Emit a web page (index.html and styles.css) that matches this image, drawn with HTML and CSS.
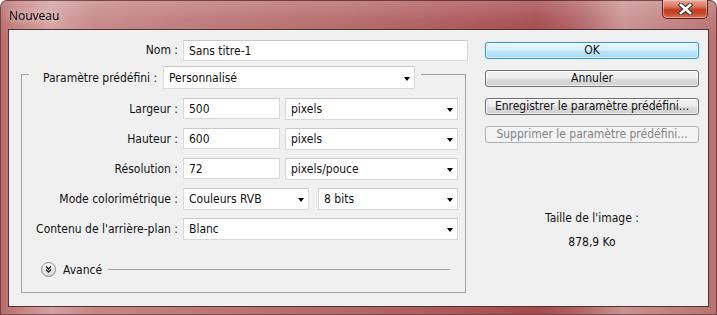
FILE: index.html
```html
<!DOCTYPE html>
<html lang="fr">
<head>
<meta charset="utf-8">
<title>Nouveau</title>
<link rel="stylesheet" href="styles.css">
</head>
<body>
<div class="window">
  <div class="titlebar">
    <span class="title">Nouveau</span>
    <div class="close">
      <svg width="15" height="12" viewBox="0 0 15 12">
        <path d="M3 2 L12 10 M12 2 L3 10" stroke="#3b3b3b" stroke-width="4.6" stroke-linecap="square" fill="none"/>
        <path d="M3 2 L12 10 M12 2 L3 10" stroke="#ffffff" stroke-width="2.6" stroke-linecap="square" fill="none"/>
      </svg>
    </div>
  </div>
  <div class="client">
    <div class="left">
      <div class="name-row">
        <span class="lbl name-lbl">Nom :</span>
        <div class="field text name-field">Sans titre-1</div>
      </div>
      <fieldset class="group">
        <legend class="preset-legend">
          <span class="lbl">Paramètre prédéfini :</span>
          <div class="field combo preset">Personnalisé<i class="arrow"></i></div>
        </legend>
        <div class="grid">
          <span class="lbl">Largeur :</span>
          <div class="pair">
            <div class="field text num">500</div>
            <div class="field combo grow">pixels<i class="arrow"></i></div>
          </div>
          <span class="lbl">Hauteur :</span>
          <div class="pair">
            <div class="field text num">600</div>
            <div class="field combo grow">pixels<i class="arrow"></i></div>
          </div>
          <span class="lbl">Résolution :</span>
          <div class="pair">
            <div class="field text num">72</div>
            <div class="field combo grow">pixels/pouce<i class="arrow"></i></div>
          </div>
          <span class="lbl">Mode colorimétrique :</span>
          <div class="pair wide-gap">
            <div class="field combo mode">Couleurs RVB<i class="arrow"></i></div>
            <div class="field combo grow">8 bits<i class="arrow"></i></div>
          </div>
          <span class="lbl">Contenu de l'arrière-plan :</span>
          <div class="pair">
            <div class="field combo grow">Blanc<i class="arrow"></i></div>
          </div>
        </div>
        <div class="adv">
          <span class="adv-btn">
            <svg width="15" height="15" viewBox="0 0 15 15">
              <defs>
                <linearGradient id="g" x1="0" y1="0" x2="0" y2="1">
                  <stop offset="0" stop-color="#ffffff"/>
                  <stop offset="1" stop-color="#d6d6d6"/>
                </linearGradient>
              </defs>
              <circle cx="7.5" cy="7.5" r="7" fill="url(#g)" stroke="#858585" stroke-width="1"/>
              <path d="M5 4.5 L7.5 7 L10 4.5 M5 7.5 L7.5 10 L10 7.5" stroke="#1a1a1a" stroke-width="1.3" fill="none"/>
            </svg>
          </span>
          <span class="adv-text">Avancé</span>
          <span class="adv-line"></span>
        </div>
      </fieldset>
    </div>
    <div class="right">
      <div class="btn default">OK</div>
      <div class="btn">Annuler</div>
      <div class="btn">Enregistrer le paramètre prédéfini...</div>
      <div class="btn disabled">Supprimer le paramètre prédéfini...</div>
      <div class="size-label">Taille de l'image :</div>
      <div class="size-value">878,9 Ko</div>
    </div>
  </div>
</div>
</body>
</html>
```

FILE: styles.css
```css
html, body {
  margin: 0;
  padding: 0;
}

body {
  width: 717px;
  height: 315px;
  overflow: hidden;
  background: #ffffff;
  font-family: "DejaVu Sans Condensed", Tahoma, sans-serif;
  font-size: 12px;
  color: #111111;
}

.window {
  width: 717px;
  height: 315px;
  box-sizing: border-box;
  padding: 0 7px 7px 7px;
  display: flex;
  flex-direction: column;
  border-radius: 7px 7px 0 0;
  border: 1px solid rgba(60, 20, 20, 0.55);
  background:
    linear-gradient(180deg, rgba(255, 255, 255, 0.2) 0px, rgba(255, 255, 255, 0.05) 20px, rgba(0, 0, 0, 0) 40px),
    linear-gradient(90deg, #b86b6b 0%, #c78585 3%, #d4a0a0 7%, #c78787 13%, #bd7777 28%, #b56868 48%, #aa5254 68%, #a4494c 75%, #b26466 81%, #ca9292 87%, #c48585 92%, #b97171 100%);
}

.titlebar {
  height: 28px;
  display: flex;
  justify-content: space-between;
  align-items: flex-start;
}

.title {
  font-family: "Open Sans", "Noto Sans", sans-serif;
  font-size: 12px;
  margin: 6px 0 0 1px;
  color: #000000;
  text-shadow: 0 0 6px rgba(255, 255, 255, 0.7), 0 0 10px rgba(255, 255, 255, 0.5);
}

.close {
  width: 46px;
  height: 19px;
  box-sizing: border-box;
  margin-right: 1px;
  margin-top: -1px;
  border: 1px solid #5a2222;
  border-top: none;
  border-radius: 0 0 5px 5px;
  background: linear-gradient(180deg, #e9a898 0%, #dc7a64 35%, #c23c22 55%, #c8462c 75%, #dd7458 100%);
  box-shadow: inset 0 0 0 1px rgba(255, 220, 210, 0.45);
  display: flex;
  align-items: center;
  justify-content: center;
}

.client {
  flex: 1;
  display: flex;
  border: 1px solid #4f3434;
  background: #f0f0f0;
  padding-top: 10px;
}

.left {
  width: 459px;
  display: flex;
  flex-direction: column;
}

.lbl {
  white-space: nowrap;
  text-align: right;
  line-height: 22px;
}

.name-row {
  display: flex;
  gap: 5px;
  height: 21px;
}

.name-lbl {
  width: 169px;
  line-height: 21px;
}

.field {
  box-sizing: border-box;
  background: #ffffff;
  border: 1px solid #d9d9d9;
  border-top-color: #c9c9c9;
  padding-left: 5px;
  display: flex;
  align-items: center;
  white-space: nowrap;
}

.text {
  height: 21px;
}

.name-field {
  width: 285px;
}

.combo {
  height: 22px;
  justify-content: space-between;
  padding-right: 4px;
}

.arrow {
  width: 0;
  height: 0;
  border-left: 3.5px solid transparent;
  border-right: 3.5px solid transparent;
  border-top: 4px solid #000000;
  margin-top: 2px;
}

.group {
  margin: -2px 0 0 12px;
  padding: 9px 6px 15px 0;
  width: 445px;
  box-sizing: border-box;
  border: 1px solid #a3a3a3;
  min-width: 0;
}

.preset-legend {
  margin-left: 7px;
  width: 392px;
  box-sizing: border-box;
  padding: 7px 6px 0 14px;
  display: flex;
  align-items: center;
  justify-content: space-between;
}

.preset {
  width: 252px;
  height: 23px;
}

.grid {
  display: grid;
  grid-template-columns: 156px 275px;
  column-gap: 5px;
  row-gap: 8px;
  grid-auto-rows: 22px;
}

.pair {
  display: flex;
  gap: 5px;
  align-items: flex-start;
}

.wide-gap {
  gap: 9px;
}

.num {
  width: 97px;
}

.grow {
  flex: 1;
}

.mode {
  width: 126px;
}

.adv {
  margin: 22px 9px 0 19px;
  height: 15px;
  display: flex;
  align-items: center;
}

.adv-btn {
  width: 15px;
  height: 15px;
  display: flex;
}

.adv-text {
  margin-left: 7px;
}

.adv-line {
  flex: 1;
  height: 1px;
  background: #a0a0a0;
  margin-left: 6px;
  margin-top: -1px;
}

.right {
  width: 214px;
  margin-left: 17px;
  padding-top: 2px;
  display: flex;
  flex-direction: column;
  gap: 11px;
}

.btn {
  height: 17px;
  box-sizing: border-box;
  border: 1px solid #707070;
  border-radius: 3px;
  background: linear-gradient(180deg, #f2f2f2 0%, #ebebeb 48%, #dddddd 52%, #cfcfcf 100%);
  box-shadow: inset 0 0 0 1px rgba(255, 255, 255, 0.7);
  text-align: center;
  line-height: 15px;
  white-space: nowrap;
}

.default {
  border-color: #3399dd;
  background: linear-gradient(180deg, #eaf6fd 0%, #d9f0fc 48%, #bee6fd 52%, #a7d9f5 100%);
  box-shadow: inset 0 0 0 1px rgba(255, 255, 255, 0.6), 0 0 1px #7fc9f7;
}

.disabled {
  border-color: #adb2b5;
  background: #f4f4f4;
  color: #838383;
  box-shadow: none;
}

.size-label {
  margin-top: 57px;
  text-align: center;
  line-height: 14px;
}

.size-value {
  margin-top: -1px;
  text-align: center;
  line-height: 14px;
}
```
